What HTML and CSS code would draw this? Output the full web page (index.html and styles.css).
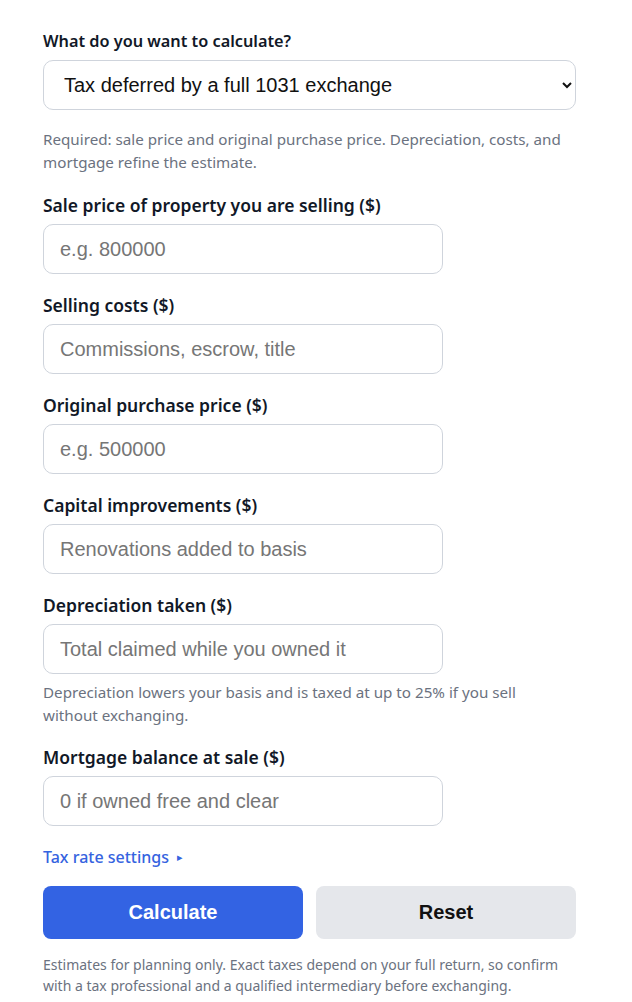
FILE: index.html
```html
<!DOCTYPE html>
<html lang="en">
  <head>
    <meta charset="utf-8">
    <title>1031 Exchange Calculator</title>
    <link rel="stylesheet" href="styles.css">
  </head>
  <body>
    <form class="calc-form" onsubmit="return false;">
      <!-- Mode -->
      <div class="field">
        <label for="mode" class="heading">What do you want to calculate?</label>
        <select id="mode" class="mode-select">
          <option>Tax deferred by a full 1031 exchange</option>
          <option>Tax owed on a partial exchange</option>
        </select>
        <p class="hint hint-wide">Required: sale price and original purchase price. Depreciation, costs, and mortgage refine the estimate.</p>
      </div>

      <div class="field">
        <label for="sale">Sale price of property you are selling ($)</label>
        <input id="sale" type="text" placeholder="e.g. 800000">
      </div>

      <div class="field">
        <label for="costs">Selling costs ($)</label>
        <input id="costs" type="text" placeholder="Commissions, escrow, title">
      </div>

      <div class="field">
        <label for="purchase">Original purchase price ($)</label>
        <input id="purchase" type="text" placeholder="e.g. 500000">
      </div>

      <div class="field">
        <label for="improve">Capital improvements ($)</label>
        <input id="improve" type="text" placeholder="Renovations added to basis">
      </div>

      <div class="field">
        <label for="depr">Depreciation taken ($)</label>
        <input id="depr" type="text" placeholder="Total claimed while you owned it">
        <p class="hint">Depreciation lowers your basis and is taxed at up to 25% if you sell without exchanging.</p>
      </div>

      <div class="field">
        <label for="mortgage">Mortgage balance at sale ($)</label>
        <input id="mortgage" type="text" placeholder="0 if owned free and clear">
      </div>

      <div class="settings-toggle">Tax rate settings <span class="caret">&#9656;</span></div>

      <div class="actions">
        <button type="button" class="btn btn-primary">Calculate</button>
        <button type="reset" class="btn btn-secondary">Reset</button>
      </div>

      <p class="disclaimer">Estimates for planning only. Exact taxes depend on your full return, so confirm with a tax professional and a qualified intermediary before exchanging.</p>
    </form>
  </body>
</html>
```

FILE: styles.css
```css
/* Basis */
body {
  margin: 0;
  padding: 29px 56px 0 43px;
  background: #ffffff;
  font-family: 'Noto Sans', 'Open Sans', sans-serif;
  color: #111827;
}

.calc-form {
  display: flex;
  flex-direction: column;
  width: 533px;
}

/* Felder */
.field {
  display: flex;
  flex-direction: column;
  margin-bottom: 19px;
}

.field label {
  font-size: 17.5px;
  font-weight: 600;
  line-height: 24px;
  margin-bottom: 7px;
  color: #111827;
}

.field label.heading {
  font-size: 16.3px;
}

.field input[type="text"] {
  width: 400px;
  height: 50px;
  box-sizing: border-box;
  padding: 0 16px;
  border: 1px solid #cfd4dc;
  border-radius: 10px;
  font-family: 'Liberation Sans', Arial, sans-serif;
  font-size: 20px;
  color: #111827;
  background: #fff;
}

.field input::placeholder {
  color: #767676;
}

.mode-select {
  width: 533px;
  height: 50px;
  box-sizing: border-box;
  padding: 0 12px 0 16px;
  border: 1px solid #cfd4dc;
  border-radius: 10px;
  font-family: 'Liberation Sans', Arial, sans-serif;
  font-size: 20px;
  color: #111;
  background: #fff;
}

/* Hinweise */
.hint {
  max-width: 520px;
  margin: 7px 0 -1px 0;
  font-size: 15.2px;
  line-height: 23px;
  color: #6b7280;
}

.hint-wide {
  margin: 18px 0 0 0;
}

.settings-toggle {
  font-size: 16px;
  font-weight: 500;
  line-height: 24px;
  color: #3563e0;
  cursor: pointer;
  margin-bottom: 17px;
}

.caret {
  font-size: 11px;
  margin-left: 4px;
  vertical-align: 2px;
}

/* Buttons */
.actions {
  display: grid;
  grid-template-columns: 1fr 1fr;
  gap: 13px;
}

.btn {
  height: 53px;
  border: none;
  border-radius: 8px;
  font-family: 'Liberation Sans', Arial, sans-serif;
  font-size: 20px;
  font-weight: bold;
  cursor: pointer;
}

.btn-primary {
  background: #3363e3;
  color: #fff;
}

.btn-secondary {
  background: #e5e7eb;
  color: #111;
}

.disclaimer {
  margin: 15px 0 0 0;
  font-size: 14px;
  line-height: 21px;
  color: #6b7280;
}
```
